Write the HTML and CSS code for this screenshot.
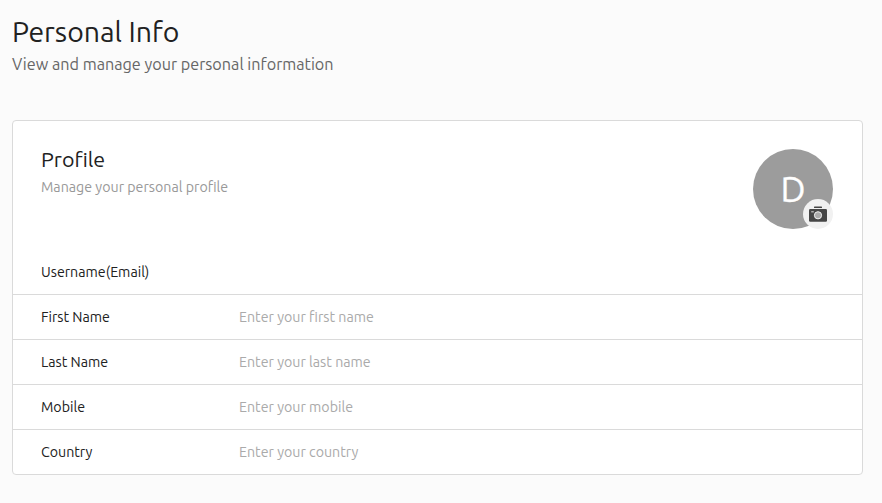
FILE: index.html
```html
<!DOCTYPE html>
<html lang="en">
<head>
<meta charset="utf-8">
<title>Personal Info</title>
<link rel="stylesheet" href="styles.css">
</head>
<body>
<main class="page">
  <header class="page-header">
    <h1 class="page-title">Personal Info</h1>
    <p class="page-subtitle">View and manage your personal information</p>
  </header>
  <section class="card">
    <div class="card-header">
      <div>
        <h2 class="card-title">Profile</h2>
        <p class="card-subtitle">Manage your personal profile</p>
      </div>
      <div class="avatar">
        <span class="avatar-letter">D</span>
        <button class="avatar-edit" type="button" aria-label="Change photo">
          <svg width="18" height="16" viewBox="0 0 18 16">
            <rect x="5" y="0.4" width="8" height="1.6" rx=".6" fill="#464646"/>
            <rect x="0" y="3" width="18" height="12.7" rx="1.2" fill="#464646"/>
            <rect x="2.2" y="5" width="2.6" height="1.5" fill="#aaa"/>
            <circle cx="9" cy="9.3" r="3.6" fill="#aaa" stroke="#f1f1f1"/>
          </svg>
        </button>
      </div>
    </div>
    <div class="row"><span class="label">Username(Email)</span></div>
    <div class="row"><span class="label">First Name</span><span class="placeholder">Enter your first name</span></div>
    <div class="row"><span class="label">Last Name</span><span class="placeholder">Enter your last name</span></div>
    <div class="row"><span class="label">Mobile</span><span class="placeholder">Enter your mobile</span></div>
    <div class="row"><span class="label">Country</span><span class="placeholder">Enter your country</span></div>
  </section>
</main>
</body>
</html>
```
FILE: styles.css
```css
* { box-sizing: border-box; }

body {
  margin: 0;
  background: #fbfbfb;
  color: #212121;
  font: 14.22px/20px Ubuntu, "Noto Sans", sans-serif;
}

h1, h2, p { margin: 0; font-weight: 400; }

.page { padding: 14px 19px 0 12px; }

.page-header { height: 106px; }

.page-title { font-size: 28.4px; line-height: 36px; }

.page-subtitle { margin-top: 2px; font-size: 16.2px; line-height: 24px; color: #666; }

.card {
  height: 355px;
  border: 1px solid #dadada;
  border-radius: 4px;
  background: #fff;
}

.card-header {
  display: flex;
  justify-content: space-between;
  height: 129px;
  padding: 28px 29px 0 28px;
}

.card-title { margin-top: -4px; font-size: 21.4px; line-height: 28px; }

.card-subtitle { margin-top: 4px; color: #999; }

.avatar {
  position: relative;
  display: flex;
  align-items: center;
  justify-content: center;
  width: 80px;
  height: 80px;
  border-radius: 50%;
  background: #9c9c9c;
  color: #fff;
}

.avatar-letter { font-size: 35.5px; line-height: 80px; -webkit-text-stroke: .3px #fff; }

.avatar-edit {
  position: absolute;
  right: 0;
  bottom: 0;
  display: flex;
  align-items: center;
  justify-content: center;
  width: 30px;
  height: 30px;
  padding: 0;
  border: 0;
  border-radius: 50%;
  background: #f1f1f1;
}

.row {
  display: flex;
  align-items: center;
  height: 45px;
  padding: 0 28px;
  border-bottom: 1px solid #dadada;
}

.row:last-child { height: 44px; border-bottom: 0; }

.label { width: 198px; }

.placeholder { color: #aaa; }
```
